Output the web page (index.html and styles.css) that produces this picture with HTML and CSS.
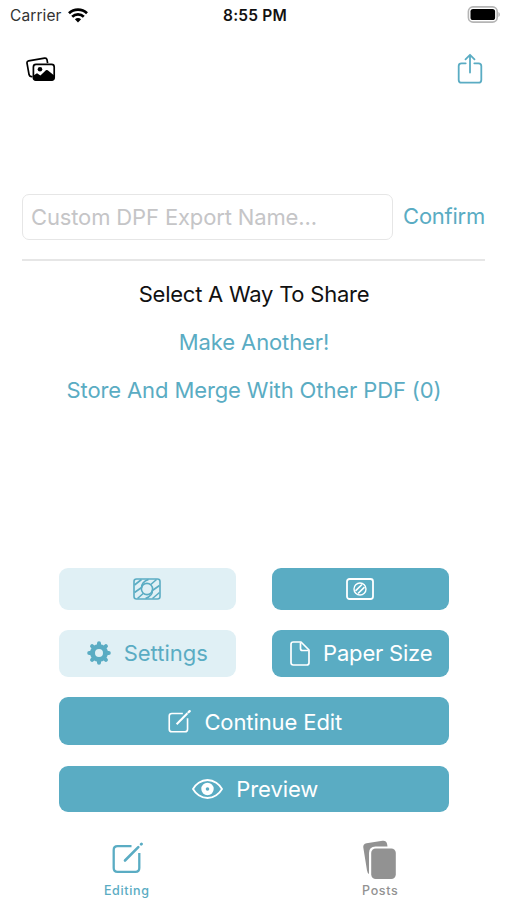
FILE: index.html
```html
<!DOCTYPE html>
<html lang="en">
<head>
  <meta charset="UTF-8" />
  <meta name="viewport" content="width=device-width, initial-scale=1.0"/>
  <title>Share PDF</title>
  <link rel="stylesheet" href="styles.css">
</head>
<body>

<!-- Status Bar -->
<div class="status-bar">
  <div class="carrier">
    <span>Carrier</span>
    <svg width="20" height="15" viewBox="0 0 20 15" fill="none" stroke="#000" stroke-width="2.7">
      <path d="M1 5.3C6 .4 14 .4 19 5.3"/>
      <path d="M4.2 8.7C7.4 5.6 12.6 5.6 15.8 8.7"/>
      <path d="M6.9 11.2C8.7 9.5 11.3 9.5 13.1 11.2L10 14.4Z" fill="#000" stroke="none"/>
    </svg>
  </div>
  <span class="time">8:55 PM</span>
  <div class="battery">
    <svg width="33" height="17" viewBox="0 0 33 17">
      <rect x="1.4" y=".9" width="28.8" height="15.2" rx="4.6" fill="#fff" stroke="#b5b5b5" stroke-width="1.6"/>
      <rect x="3.5" y="3" width="24.6" height="11" rx="2.6" fill="#000"/>
      <path d="M31.400 6c2 .7 2 4.300 0 5z" fill="#b5b5b5"/>
    </svg>
  </div>
</div>

<!-- Toolbar -->
<div class="toolbar">
  <button class="icon-button">
    <svg width="30" height="25" viewBox="0 0 30 25">
      <path d="M6.5 19.5L5.2 19.6Q3.5 19.6 3.1 17.8L1 6.2Q.7 4.3 2.6 3.9L18.6 1.1Q20.6.8 21 2.7L21.6 6.2" fill="none" stroke="#000" stroke-width="1.7"/>
      <rect x="7.4" y="7.3" width="20.8" height="15.8" rx="2.6" fill="#fff" stroke="#000" stroke-width="1.7"/>
      <circle cx="14" cy="12.3" r="2.3"/>
      <path d="M7.5 18.5L11 16.2L14.4 18.5L19.9 13.2Q20.8 12.6 21.7 13.3L28.2 18.5V21Q28.2 23.4 26 23.4H9.6Q7.5 23.4 7.5 21Z"/>
    </svg>
  </button>
  <button class="icon-button">
    <svg width="26" height="32" viewBox="0 0 26 32" fill="none" stroke="#5aacc3" stroke-width="1.8" stroke-linecap="round" stroke-linejoin="round">
      <path d="M8.7 10.3H4.5Q1.7 10.3 1.7 13.1V26.9Q1.7 29.7 4.5 29.7H21.5Q24.3 29.7 24.3 26.9V13.1Q24.3 10.3 21.5 10.3H17.3"/>
      <path d="M13 19.5V2M8.5 6.3L13 1.8L17.5 6.3"/>
    </svg>
  </button>
</div>

<!-- Export Options -->
<div class="export">
  <div class="name-row">
    <input class="name-input" type="text" placeholder="Custom DPF Export Name...">
    <button class="link confirm">Confirm</button>
  </div>
  <h1>Select A Way To Share</h1>
  <button class="link another">Make Another!</button>
  <button class="link merge">Store And Merge With Other PDF (0)</button>
</div>

<!-- Action Buttons -->
<div class="actions">
  <button class="btn light short">
    <svg width="28" height="22" viewBox="0 0 28 22" fill="none" stroke="#5aacc3" stroke-width="1.6">
      <rect x="1" y="1" width="26" height="20" rx="2.5"/>
      <circle cx="14" cy="11" r="5.6"/>
      <path d="M1.5 7L8.5 1.5M1.5 14.500L8.600 9.500Q8.500 4 15.500 1.500M4.500 20.500L10.200 15.500M12.500 20.500Q19.800 17.500 19.400 12.500L26.500 7.500M19.500 20.500L26.500 14.500M17.800 6.500L23.500 1.500"/>
    </svg>
  </button>
  <button class="btn short">
    <svg width="28" height="22" viewBox="0 0 28 22" fill="none" stroke="#fff" stroke-width="1.8">
      <rect x="1" y="1" width="26" height="20" rx="2.5"/>
      <circle cx="14" cy="11" r="6" stroke-width="1.4"/>
      <path d="M9.500 12.800L16 6.500M12 15.500L18.500 9.200" stroke-width="1.700"/>
    </svg>
  </button>
  <button class="btn light">
    <svg width="24" height="24" viewBox="0 0 24 24" fill="none" stroke="#5aacc3">
      <circle cx="12" cy="12" r="6.5" stroke-width="5"/>
      <path d="M12 2.2V5M12 19V21.8M2.2 12H5M19 12H21.8M5.07 5.07L7 7M17 17L18.93 18.93M18.93 5.07L17 7M7 17L5.07 18.93" stroke-width="4" stroke-linecap="round"/>
    </svg>
    <span>Settings</span>
  </button>
  <button class="btn paper">
    <svg width="20" height="25" viewBox="0 0 20 25" fill="none" stroke="#fff" stroke-width="1.7" stroke-linejoin="round">
      <path d="M3.3 1H11L19 9V21.7Q19 24 16.7 24H3.3Q1 24 1 21.7V3.3Q1 1 3.3 1Z"/>
      <path d="M10.5 1.5V7.5Q10.5 9.5 12.5 9.5H18.5"/>
    </svg>
    <span>Paper Size</span>
  </button>
  <button class="btn wide tall">
    <svg width="23" height="23" viewBox="0 0 24 24" fill="none" stroke="#fff" stroke-width="1.7">
      <path d="M15.5 3.6H4Q1.3 3.6 1.3 6.3V20Q1.3 22.7 4 22.7H17.7Q20.4 22.7 20.4 20V8.5"/>
      <path d="M9 14.8L20.3 3.5" stroke-width="2.2"/>
      <path d="M21.4 2.4L22.6 1.2" stroke-width="2.4" stroke-linecap="round"/>
    </svg>
    <span>Continue Edit</span>
  </button>
  <button class="btn wide">
    <svg width="31" height="20" viewBox="0 0 31 20" fill="none" stroke="#fff" stroke-width="1.8">
      <path d="M1 10C3.5 5.5 9 1 15.5 1S27.5 5.5 30 10C27.5 14.5 22 19 15.5 19S3.5 14.5 1 10Z"/>
      <circle cx="15.5" cy="10" r="4" stroke-width="4.4"/>
    </svg>
    <span>Preview</span>
  </button>
</div>

<!-- Tab Bar -->
<div class="tab-bar">
  <div class="tab active">
    <svg width="32" height="36" viewBox="0 0 32 36" fill="none" stroke="#5aacc3" stroke-width="2.3">
      <path d="M20.5 6.2H6.5Q2.7 6.2 2.7 10V28Q2.7 31.8 6.5 31.8H24.5Q28.3 31.8 28.3 28V13"/>
      <path d="M14 20.5L27.3 7.2" stroke-width="2.6" stroke-linecap="round"/>
      <path d="M30.2 4.3L30.5 4" stroke-width="2.8" stroke-linecap="round"/>
    </svg>
    <span>Editing</span>
  </div>
  <div class="tab">
    <svg width="36" height="40" viewBox="0 0 36 40" fill="#929292">
      <path d="M4.5 3.2L20.5.8Q24.2.3 25.1 4L25.5 6.5H13.5Q7 6.5 7 13V34Q5.4 33 5 30.5L1.3 7.5Q.8 3.9 4.5 3.2Z"/>
      <rect x="9.2" y="8.5" width="24.6" height="30.5" rx="4.5"/>
    </svg>
    <span>Posts</span>
  </div>
</div>

</body>
</html>
```
FILE: styles.css
```css
* { box-sizing: border-box; margin: 0; padding: 0; }
body { font-family: Inter, 'Liberation Sans', sans-serif; background: #fff; color: #111; height: 900px; display: flex; flex-direction: column; overflow: hidden; }
button { font: inherit; background: none; border: none; cursor: pointer; white-space: nowrap; }
svg { display: block; flex: none; }

.status-bar { height: 30px; padding: 1px 7px 0 10px; display: grid; grid-template-columns: 1fr auto 1fr; align-items: center; font-size: 15.5px; }
.carrier { display: flex; align-items: center; gap: 6px; color: #333; letter-spacing: 0.1px; }
.time { font-weight: 600; letter-spacing: 0.2px; }
.battery { display: flex; justify-content: flex-end; padding-bottom: 2px; }

.toolbar { height: 78px; padding: 1px 24px 0 26px; display: flex; justify-content: space-between; align-items: center; }

.export { margin-top: 86px; padding: 0 22px; display: flex; flex-direction: column; align-items: center; font-size: 22px; }
.name-row { width: 100%; height: 67px; padding-bottom: 19px; border-bottom: 2px solid #e6e6e6; display: flex; align-items: center; justify-content: space-between; }
.name-input { width: 371px; height: 46px; padding: 0 8px; border: 1.5px solid #e6e6e6; border-radius: 7px; font: inherit; letter-spacing: -0.14px; outline: none; }
.name-input::placeholder { color: #c5c5c7; }
.link { color: #5aacc3; }
.confirm { letter-spacing: -0.25px; padding-bottom: 1px; }
h1 { font-size: 22px; font-weight: 400; line-height: 48px; margin-top: 9px; padding-left: 1px; letter-spacing: -0.24px; }
.export > .link { line-height: 48px; padding-left: 1px; letter-spacing: -0.12px; }

.actions { margin-top: 154px; padding: 0 58px 0 58.5px; display: grid; grid-template-columns: 177.5px 177.5px; justify-content: space-between; row-gap: 20.5px; font-size: 22px; }
.btn { height: 46.5px; border-radius: 9px; background: #5aacc3; color: #fff; display: flex; justify-content: center; align-items: center; gap: 13px; }
.btn.light { background: #e0f0f5; color: #5aacc3; }
.btn.short { height: 42px; }
.btn.tall { height: 48px; padding-top: 1px; }
.btn.wide { grid-column: span 2; letter-spacing: -0.1px; padding-left: 3px; }
.btn.paper { letter-spacing: -0.2px; padding-left: 2px; }

.tab-bar { height: 88px; display: flex; padding-top: 28px; }
.tab { flex: 1; display: flex; flex-direction: column; align-items: center; justify-content: space-between; height: 58px; font-size: 12.5px; font-weight: 500; letter-spacing: 0.65px; color: #929292; }
.tab.active { color: #5aacc3; }
```
